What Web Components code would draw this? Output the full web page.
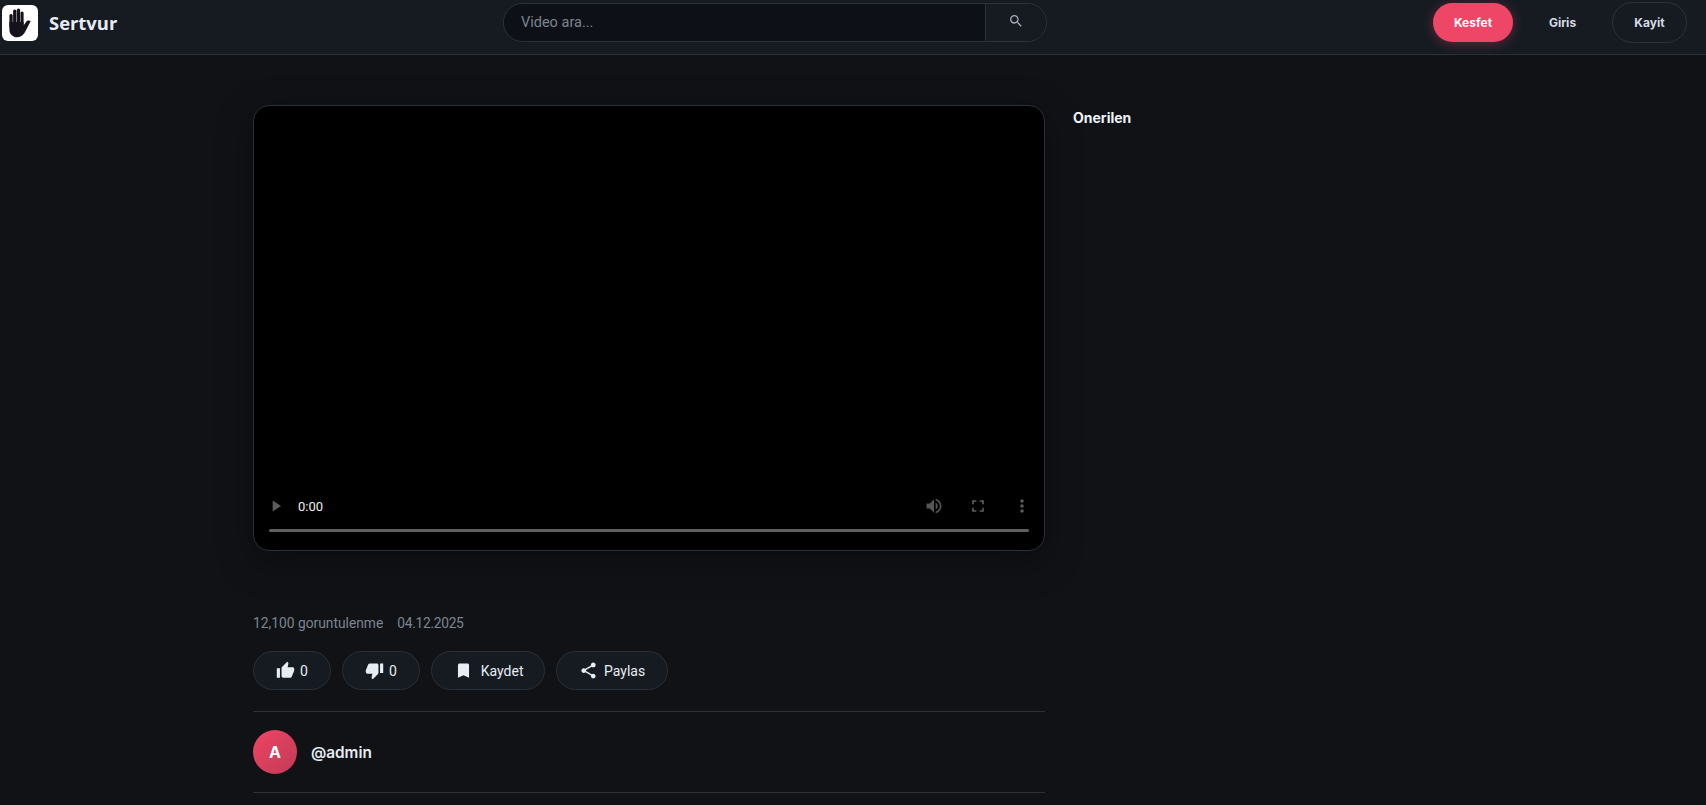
<!DOCTYPE html>
<html lang="tr">
<head>
<meta charset="utf-8">
<title>Sertvur</title>
<style>
	html, body { margin: 0; height: 100%; overflow: hidden; background: #101216; }
	body { font-family: Roboto, "Liberation Sans", sans-serif; color: #e6edf3; }
</style>
</head>
<body>
<site-header></site-header>
<watch-page>
	<video-player></video-player>
	<video-meta views="12,100 goruntulenme" date="04.12.2025"></video-meta>
	<action-bar>
		<action-button icon="up" label="0"></action-button>
		<action-button icon="down" label="0"></action-button>
		<action-button icon="save" label="Kaydet" style="gap:8px;padding-right:21px"></action-button>
		<action-button icon="share" label="Paylas" style="gap:6px;padding:0 21.500px"></action-button>
	</action-bar>
	<channel-row name="@admin" letter="A"></channel-row>
	<span slot="side">Onerilen</span>
</watch-page>

<script>
	(() => {
		const icons = {
			up: '<path d="M1 21h4V9H1v12zm22-11c0-1.1-.9-2-2-2h-6.31l.95-4.57.03-.32c0-.41-.17-.79-.44-1.06L14.17 1 7.59 7.59C7.22 7.95 7 8.45 7 9v10c0 1.1.9 2 2 2h9c.83 0 1.54-.5 1.84-1.22l3.02-7.05c.09-.23.14-.47.14-.73v-2z"/>',
			down: '<path d="M15 3H6c-.83 0-1.54.5-1.84 1.22l-3.02 7.05c-.09.23-.14.47-.14.73v2c0 1.1.9 2 2 2h6.31l-.95 4.57-.03.32c0 .41.17.79.44 1.06L9.83 23l6.59-6.59c.36-.36.58-.86.58-1.41V5c0-1.1-.9-2-2-2zm4 0v12h4V3h-4z"/>',
			save: '<path d="M17 3H7c-1.1 0-2 .9-2 2v16l7-3 7 3V5c0-1.1-.9-2-2-2z"/>',
			share: '<path d="M18 16.08c-.76 0-1.44.3-1.96.77L8.91 12.7c.05-.23.09-.46.09-.7s-.04-.47-.09-.7l7.05-4.11c.54.5 1.25.81 2.04.81 1.66 0 3-1.34 3-3s-1.34-3-3-3-3 1.34-3 3c0 .24.04.47.09.7L8.04 9.81C7.5 9.31 6.79 9 6 9c-1.66 0-3 1.34-3 3s1.34 3 3 3c.79 0 1.5-.31 2.04-.81l7.12 4.16c-.05.21-.08.43-.08.65 0 1.61 1.31 2.92 2.92 2.92 1.61 0 2.92-1.31 2.92-2.92s-1.31-2.92-2.92-2.92z"/>'
		};

		class SiteHeader extends HTMLElement {
			constructor() {
				super();
				this.attachShadow({ mode: 'open' }).innerHTML = `
					<style>
						:host {
							display: grid;
							grid-template-columns: 503px 544px 1fr;
							grid-template-rows: 41px;
							align-items: center;
							box-sizing: border-box;
							height: 55px;
							padding-top: 2px;
							background: #161b22;
							border-bottom: 1px solid #2b323b;
						}
						.brand { display: flex; align-items: center; gap: 11px; padding: 0 0 0 2px; }
						.logo {
							width: 36px; height: 36px; border-radius: 6px; background: #fff;
							display: flex; align-items: center; justify-content: center;
						}
						.name { font: 700 18.400px "Open Sans", sans-serif; color: #e6ebf5; }
						.search {
							display: flex; box-sizing: border-box; height: 39px;
							border: 1px solid #2b323b; border-radius: 20px; overflow: hidden;
						}
						.field {
							flex: 1; background: #0d1117; color: #7d848d; font-size: 14.500px;
							padding-left: 17px; line-height: 37px;
						}
						.go {
							width: 61px; border-left: 1px solid #2b323b; background: #161b22;
							display: flex; align-items: center; justify-content: center; padding-bottom: 3px; box-sizing: border-box;
						}
						nav { display: flex; align-items: center; padding-left: 386px; }
						.btn { font: 700 12px Inter, sans-serif; color: #d5dae3; display: flex; align-items: center; justify-content: center; box-sizing: border-box; border-radius: 22px; }
						.hot {
							width: 80px; height: 39px; color: #fff; background: #ee4666;
							box-shadow: 0 2px 12px rgba(239,69,101,.35);
						}
						.plain { width: 99px; height: 41px; }
						.line { width: 75px; height: 41px; border: 1px solid #2b323b; }
					</style>
					<div class="brand">
						<span class="logo">
							<svg width="26" height="30" viewBox="0 0 26 30" fill="#16121a">
								<rect x="2.400" y="6" width="3.300" height="14" rx="1.600"/>
								<rect x="6.100" y="1.500" width="3.300" height="16" rx="1.600"/>
								<rect x="9.800" y="0.500" width="3.300" height="16" rx="1.600"/>
								<rect x="13.500" y="3.500" width="3.100" height="15" rx="1.500"/>
								<path d="M2.400 14h14.200v3.500l2.600-3.800c.7-1 1.700-1.500 2.700-1.200l1.800.6-5.100 10C16.900 27 14 29.300 10.500 29.300c-4.800 0-8.100-3.200-8.100-7.800z"/>
							</svg>
						</span>
						<span class="name">Sertvur</span>
					</div>
					<div class="search">
						<div class="field">Video ara...</div>
						<div class="go">
							<svg width="16" height="16" viewBox="0 0 24 24" fill="#a4abb5"><path d="M15.500 14h-.79l-.28-.27A6.470 6.470 0 0 0 16 9.500 6.500 6.500 0 1 0 9.500 16c1.610 0 3.090-.59 4.230-1.570l.27.28v.79l5 4.990L20.490 19l-4.990-5zm-6 0C7.010 14 5 11.990 5 9.500S7.010 5 9.500 5 14 7.010 14 9.500 11.990 14 9.500 14z"/></svg>
						</div>
					</div>
					<nav>
						<span class="btn hot">Kesfet</span>
						<span class="btn plain">Giris</span>
						<span class="btn line">Kayit</span>
					</nav>`;
			}
		}

		class WatchPage extends HTMLElement {
			constructor() {
				super();
				this.attachShadow({ mode: 'open' }).innerHTML = `
					<style>
						:host { display: block; }
						.wrap {
							width: 1200px; margin: 0 auto; padding-top: 50px;
							display: grid; grid-template-columns: 792px 380px; column-gap: 28px;
						}
						aside { font: 700 14px Inter, sans-serif; color: #f0f4fa; padding-top: 5px; line-height: 16px; }
					</style>
					<div class="wrap">
						<main><slot></slot></main>
						<aside><slot name="side"></slot></aside>
					</div>`;
			}
		}

		class VideoPlayer extends HTMLElement {
			constructor() {
				super();
				this.attachShadow({ mode: 'open' }).innerHTML = `
					<style>
						:host {
							display: flex; flex-direction: column; justify-content: flex-end;
							box-sizing: border-box; height: 446px; background: #000;
							border: 1px solid #2b2f36; border-radius: 16px;
							box-shadow: 0 10px 36px rgba(0,0,0,.35);
							padding: 0 15px 18px 15px;
						}
						.ctrl { display: flex; align-items: center; height: 20px; margin-bottom: 13px; }
						.time { font: 13px Roboto, sans-serif; color: #f0f0f0; margin-left: 15px; flex: 1; }
						svg { display: block; }
						.right { display: flex; align-items: center; gap: 24px; margin-right: -3px; }
						.bar { height: 3px; background: #5f5f5f; border-radius: 2px; }
					</style>
					<div class="ctrl">
						<svg width="14" height="14" viewBox="0 0 14 14" fill="#5c5c5c"><path d="M3.700 1.500v11L12 7z"/></svg>
						<span class="time">0:00</span>
						<div class="right">
							<svg width="20" height="20" viewBox="0 0 24 24" fill="#555"><path d="M3 9v6h4l5 5V4L7 9H3zm13.500 3A4.500 4.500 0 0 0 14 7.970v8.050c1.480-.73 2.500-2.250 2.500-4.020zM14 3.230v2.060c2.890.86 5 3.540 5 6.710s-2.110 5.850-5 6.710v2.060c4.010-.91 7-4.490 7-8.770s-2.990-7.860-7-8.770z"/></svg>
							<svg width="20" height="20" viewBox="0 0 24 24" fill="#5c5c5c"><path d="M7 14H5v5h5v-2H7v-3zm-2-4h2V7h3V5H5v5zm12 7h-3v2h5v-5h-2v3zM14 5v2h3v3h2V5h-5z"/></svg>
							<svg width="20" height="20" viewBox="0 0 24 24" fill="#5c5c5c"><path d="M12 8c1.100 0 2-.9 2-2s-.9-2-2-2-2 .9-2 2 .9 2 2 2zm0 2c-1.100 0-2 .9-2 2s.9 2 2 2 2-.9 2-2-.9-2-2-2zm0 6c-1.100 0-2 .9-2 2s.9 2 2 2 2-.9 2-2-.9-2-2-2z"/></svg>
						</div>
					</div>
					<div class="bar"></div>`;
			}
		}

		class VideoMeta extends HTMLElement {
			constructor() {
				super();
				this.attachShadow({ mode: 'open' }).innerHTML = `
					<style>
						:host { display: flex; gap: 14px; margin-top: 63px; font-size: 13.800px; line-height: 18px; color: #7d8590; }
						.date { letter-spacing: -.3px; }
					</style>
					<span>${this.getAttribute('views')}</span><span class="date">${this.getAttribute('date')}</span>`;
			}
		}

		class ActionBar extends HTMLElement {
			constructor() {
				super();
				this.attachShadow({ mode: 'open' }).innerHTML = `
					<style>
						:host { display: flex; gap: 11px; margin-top: 19px; padding-bottom: 21px; border-bottom: 1px solid #2b2f36; }
					</style>
					<slot></slot>`;
			}
		}

		class ActionButton extends HTMLElement {
			constructor() {
				super();
				this.attachShadow({ mode: 'open' }).innerHTML = `
					<style>
						:host {
							display: flex; align-items: center; justify-content: center; gap: 5px;
							box-sizing: border-box; height: 39px; padding: 0 22px;
							background: #161b22; border: 1px solid #2b2f36; border-radius: 20px;
							font-size: 14px; color: #e6edf3;
						}
						svg { display: block; }
					</style>
					<svg width="19" height="19" viewBox="0 0 24 24" fill="#e6edf3">${icons[this.getAttribute('icon')]}</svg>
					<span>${this.getAttribute('label')}</span>`;
			}
		}

		class ChannelRow extends HTMLElement {
			constructor() {
				super();
				this.attachShadow({ mode: 'open' }).innerHTML = `
					<style>
						:host { display: flex; align-items: center; gap: 14px; padding: 18px 0; border-bottom: 1px solid #2b2f36; }
						.avatar {
							width: 44px; height: 44px; border-radius: 50%;
							background: linear-gradient(135deg, #ef4565, #c23a55);
							color: #fff; font: 700 16px Inter, sans-serif;
							display: flex; align-items: center; justify-content: center;
						}
						.name { font: 600 15.300px Inter, sans-serif; color: #e6edf3; }
					</style>
					<span class="avatar">${this.getAttribute('letter')}</span>
					<span class="name">${this.getAttribute('name')}</span>`;
			}
		}

		customElements.define('site-header', SiteHeader);
		customElements.define('watch-page', WatchPage);
		customElements.define('video-player', VideoPlayer);
		customElements.define('video-meta', VideoMeta);
		customElements.define('action-bar', ActionBar);
		customElements.define('action-button', ActionButton);
		customElements.define('channel-row', ChannelRow);
	})()
</script>
</body>
</html>
